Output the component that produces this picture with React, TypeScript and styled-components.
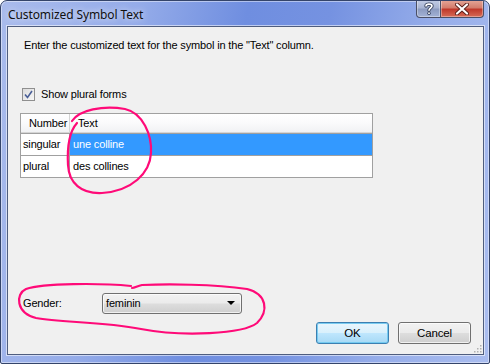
import React from "react";
import styled, { createGlobalStyle } from "styled-components";

const GlobalStyle = createGlobalStyle`
  html, body {
    margin: 0;
    padding: 0;
    background: #ffffff;
  }
  body {
    font-family: "Liberation Sans", Arial, sans-serif;
    font-size: 11px;
    letter-spacing: -0.15px;
    color: #000;
  }
`;

const Window = styled.div`
  position: relative;
  width: 490px;
  height: 364px;
  box-sizing: border-box;
  border: 1px solid #34446a;
  border-radius: 7px 7px 2px 2px;
  background: linear-gradient(
    100deg,
    #a9bbec 0%,
    #95ace9 25%,
    #6f8ee0 45%,
    #7592e1 60%,
    #97aeea 80%,
    #aabdef 100%
  );
  box-shadow: inset 0 0 0 1px rgba(255, 255, 255, 0.45);
  display: flex;
  flex-direction: column;
  overflow: hidden;
`;

const TitleBar = styled.div`
  height: 25px;
  display: flex;
  align-items: flex-start;
  justify-content: space-between;
  padding: 0 5px 0 7px;
`;

const Title = styled.div`
  font-family: "Noto Sans", "Open Sans", sans-serif;
  font-size: 12px;
  letter-spacing: -0.1px;
  color: #101010;
  padding-top: 5px;
  text-shadow: 0 0 6px rgba(255, 255, 255, 0.9);
`;

const Controls = styled.div`
  display: flex;
  margin-top: -1px;
`;

const CaptionButton = styled.div<{ $kind: "help" | "close" }>`
  width: ${({ $kind }) => ($kind === "help" ? "25px" : "43px")};
  height: 18px;
  box-sizing: border-box;
  display: flex;
  align-items: center;
  justify-content: center;
  border: 1px solid #4a4f66;
  border-top: none;
  border-left: ${({ $kind }) => ($kind === "help" ? "1px solid #4a4f66" : "none")};
  border-radius: ${({ $kind }) => ($kind === "help" ? "0 0 0 4px" : "0 0 4px 0")};
  background: ${({ $kind }) =>
    $kind === "help"
      ? "linear-gradient(180deg, #c3cde6 0%, #a9b5d3 45%, #8c9bc0 55%, #a3b2d6 100%)"
      : "linear-gradient(180deg, #e5a799 0%, #d37d6d 45%, #c0392b 55%, #d66b56 100%)"};
  box-shadow: inset 0 0 0 1px rgba(255, 255, 255, 0.35);
`;

const Client = styled.div`
  flex: 1;
  margin: 0 5px 8px 6px;
  background: #f0f0f0;
  border: 1px solid #4f5d7e;
  box-shadow: 0 0 0 1px rgba(255, 255, 255, 0.55);
  display: flex;
  flex-direction: column;
  padding: 11px 12px 10px 12px;
  position: relative;
`;

const Instruction = styled.div`
  line-height: 14px;
  margin-left: 4px;
`;

const CheckRow = styled.label`
  display: flex;
  align-items: center;
  gap: 6px;
  margin-top: 35px;
  margin-left: 2px;
  height: 14px;
`;

const CheckBox = styled.span`
  width: 13px;
  height: 13px;
  box-sizing: border-box;
  border: 1px solid #8f8f8f;
  background: linear-gradient(135deg, #dcdcdc 0%, #f6f6f6 100%);
  display: flex;
  align-items: center;
  justify-content: center;
`;

const Table = styled.div`
  margin-top: 12px;
  width: 351px;
  border: 1px solid #a0a0a0;
  background: #ffffff;
  display: grid;
  grid-template-columns: 49px 1fr;
`;

const HeadCell = styled.div<{ $first?: boolean }>`
  height: 18px;
  line-height: 18px;
  padding-left: 8px;
  background: linear-gradient(180deg, #ffffff 0%, #fbfbfc 45%, #f1f2f4 100%);
  border-bottom: 1px solid #d5d5d5;
  border-right: ${({ $first }) => ($first ? "1px solid #d5d5d5" : "none")};
`;

const Cell = styled.div<{ $first?: boolean; $selected?: boolean }>`
  height: 21px;
  line-height: 21px;
  padding-left: ${({ $first }) => ($first ? "2px" : "3px")};
  border-top: 1px solid #a0a0a0;
  border-right: ${({ $first }) => ($first ? "1px solid #a0a0a0" : "none")};
  background: ${({ $selected }) => ($selected ? "#3399ff" : "#ffffff")};
  color: ${({ $selected }) => ($selected ? "#ffffff" : "#000000")};
`;

const Spacer = styled.div`
  flex: 1;
`;

const GenderRow = styled.div`
  display: flex;
  align-items: center;
  height: 20px;
  margin-left: 3px;
`;

const GenderLabel = styled.span`
  width: 79px;
`;

const Combo = styled.div`
  width: 140px;
  height: 21px;
  box-sizing: border-box;
  border: 1px solid #707070;
  border-radius: 3px;
  background: linear-gradient(180deg, #f2f2f2 0%, #ebebeb 48%, #dddddd 52%, #cfcfcf 100%);
  box-shadow: inset 0 0 0 1px rgba(255, 255, 255, 0.7);
  display: flex;
  align-items: center;
  justify-content: space-between;
  padding: 0 6px 0 3px;
`;

const ButtonRow = styled.div`
  display: flex;
  justify-content: flex-end;
  gap: 9px;
  margin-top: 9px;
`;

const Button = styled.div<{ $default?: boolean }>`
  width: 73px;
  height: 22px;
  box-sizing: border-box;
  border: 1px solid ${({ $default }) => ($default ? "#3c7fb1" : "#707070")};
  border-radius: 3px;
  background: ${({ $default }) =>
    $default
      ? "linear-gradient(180deg, #eaf6fd 0%, #d9f0fc 48%, #bee6fd 52%, #a7d9f5 100%)"
      : "linear-gradient(180deg, #f2f2f2 0%, #ebebeb 48%, #dddddd 52%, #cfcfcf 100%)"};
  box-shadow: inset 0 0 0 1px
    ${({ $default }) => ($default ? "rgba(110, 200, 240, 0.9)" : "rgba(255, 255, 255, 0.7)")};
  display: flex;
  align-items: center;
  justify-content: center;
  font-size: 11.5px;
`;

const Grip = styled.svg`
  position: absolute;
  right: 1px;
  bottom: 1px;
`;

const Annotations = styled.svg`
  position: absolute;
  left: 0;
  top: 0;
  pointer-events: none;
`;

export default function App(): React.JSX.Element {
  return (
    <>
      <GlobalStyle />
      <Window>
        <TitleBar>
          <Title>Customized Symbol Text</Title>
          <Controls>
            <CaptionButton $kind="help">
              <svg width="10" height="13" viewBox="0 0 10 13">
                <path
                  d="M2 4 C2 1.5 8 1.5 8 4 C8 6 5 6 5 8.3"
                  fill="none"
                  stroke="#3a4560"
                  strokeWidth="3.4"
                  strokeLinecap="round"
                />
                <circle cx="5" cy="11.2" r="1.7" fill="#3a4560" />
                <path
                  d="M2 4 C2 1.5 8 1.5 8 4 C8 6 5 6 5 8.3"
                  fill="none"
                  stroke="#ffffff"
                  strokeWidth="1.6"
                  strokeLinecap="round"
                />
                <circle cx="5" cy="11.2" r="0.9" fill="#ffffff" />
              </svg>
            </CaptionButton>
            <CaptionButton $kind="close">
              <svg width="14" height="12" viewBox="0 0 14 12">
                <path d="M2 1.5 L12 10.5 M12 1.5 L2 10.5" stroke="#5a1f1a" strokeWidth="4" strokeLinecap="round" />
                <path d="M2 1.5 L12 10.5 M12 1.5 L2 10.5" stroke="#ffffff" strokeWidth="2.2" strokeLinecap="round" />
              </svg>
            </CaptionButton>
          </Controls>
        </TitleBar>
        <Client>
          <Instruction>Enter the customized text for the symbol in the "Text" column.</Instruction>
          <CheckRow>
            <CheckBox>
              <svg width="9" height="9" viewBox="0 0 9 9">
                <path d="M1 4.5 L3.5 7.5 L8 1" fill="none" stroke="#4a5f97" strokeWidth="1.6" />
              </svg>
            </CheckBox>
            <span>Show plural forms</span>
          </CheckRow>
          <Table>
            <HeadCell $first>Number</HeadCell>
            <HeadCell>Text</HeadCell>
            <Cell $first>singular</Cell>
            <Cell $selected>une colline</Cell>
            <Cell $first>plural</Cell>
            <Cell>des collines</Cell>
          </Table>
          <Spacer />
          <GenderRow>
            <GenderLabel>Gender:</GenderLabel>
            <Combo>
              <span>feminin</span>
              <svg width="8" height="4" viewBox="0 0 8 4">
                <path d="M0 0 L8 0 L4 4 Z" fill="#000000" />
              </svg>
            </Combo>
          </GenderRow>
          <ButtonRow>
            <Button $default>OK</Button>
            <Button>Cancel</Button>
          </ButtonRow>
          <Grip width="10" height="10" viewBox="0 0 10 10">
            {[
              [8, 0],
              [8, 3],
              [5, 3],
              [8, 6],
              [5, 6],
              [2, 6],
            ].map(([x, y]) => (
              <rect key={`${x}-${y}`} x={x} y={y + 2} width="1.5" height="1.5" fill="#b0b0b0" />
            ))}
          </Grip>
        </Client>
        <Annotations width="490" height="364" viewBox="0 0 490 364">
          <path
            d="M71 120 C78 109 102 104 124 108 C142 112 151 134 150 152 C149 172 131 190 101 192 C80 193 68 182 67 164 C66 146 68 131 76 122"
            fill="none"
            stroke="#ff0a78"
            strokeWidth="2.2"
            strokeLinecap="round"
          />
          <path
            d="M130 285 C100 282 42 282 25 288 C14 293 15 312 35 317 C60 322 100 320 140 328 C182 336 242 333 256 322 C268 310 266 293 246 288 C212 283 166 283 141 284 C136 285 134 287 131 287"
            fill="none"
            stroke="#ff0a78"
            strokeWidth="2.2"
            strokeLinecap="round"
          />
        </Annotations>
      </Window>
    </>
  );
}
